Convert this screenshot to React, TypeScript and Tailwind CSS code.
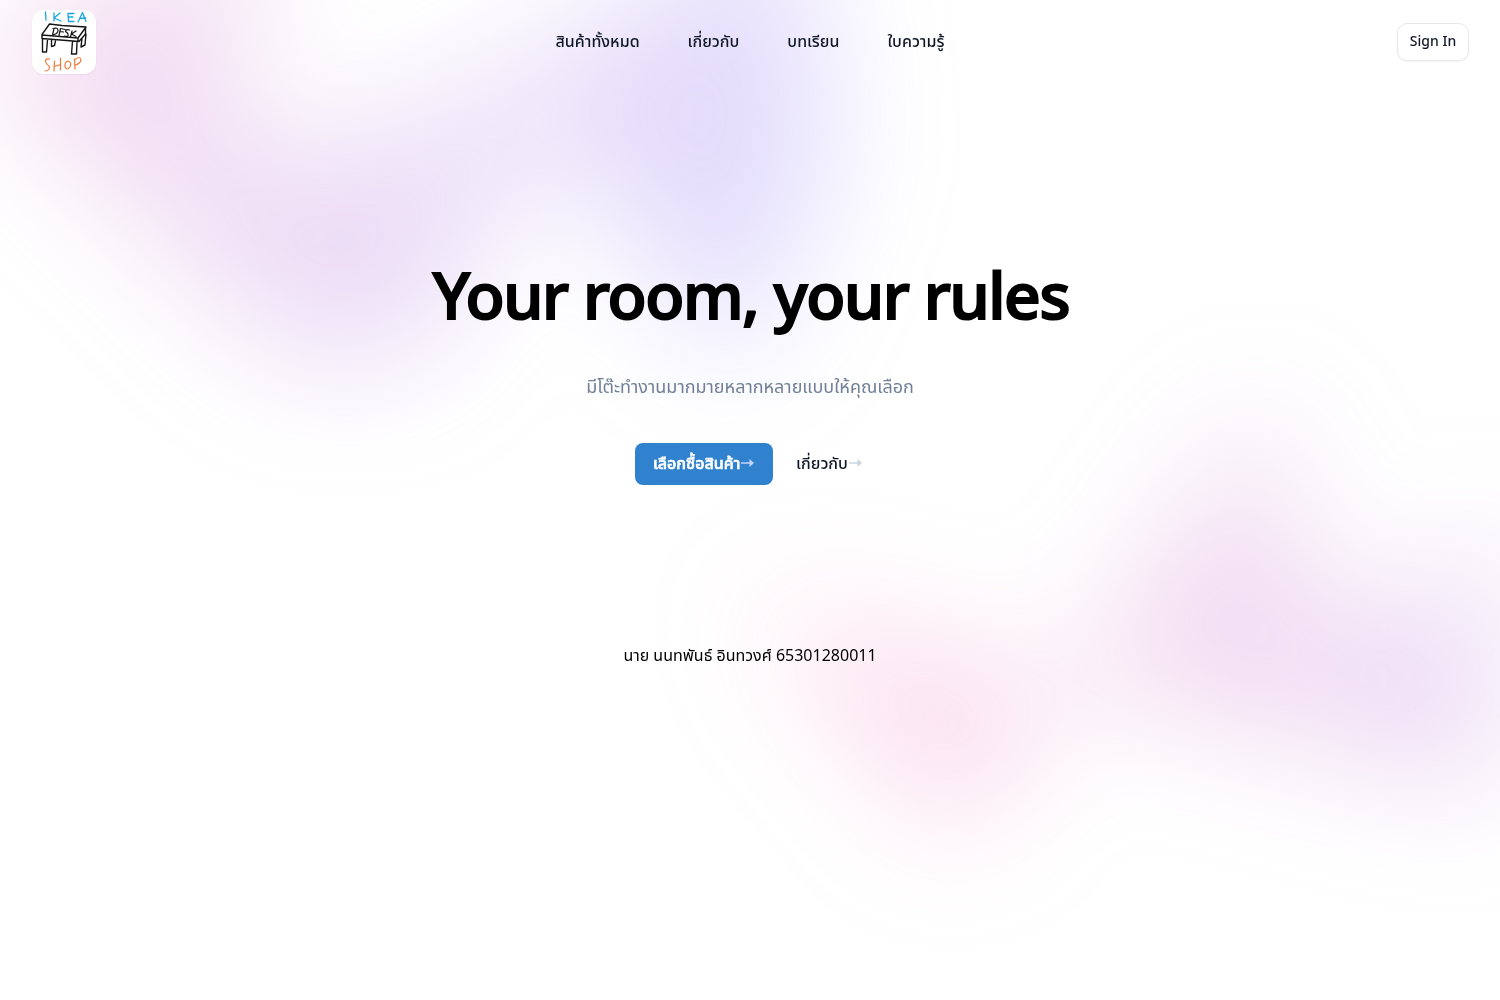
const blobShape =
  "[clip-path:polygon(74.1%_44.1%,100%_61.6%,97.5%_26.9%,85.5%_0.1%,80.7%_2%,72.5%_32.5%,60.2%_62.4%,52.4%_68.1%,47.5%_58.3%,45.2%_34.5%,27.5%_76.7%,0.1%_64.9%,17.9%_100%,27.6%_76.8%,76.1%_97.7%,74.1%_44.1%)]";

const links = ["สินค้าทั้งหมด", "เกี่ยวกับ", "บทเรียน", "ใบความรู้"];

function Logo() {
  return (
    <svg viewBox="0 0 64 64" className="size-16 rounded-xl bg-white shadow-xs" fill="none" strokeLinecap="round" strokeLinejoin="round">
      <g stroke="#1ba5e0" strokeWidth="1.3">
        <path d="M13.500 2L14 10M22 3V11M28 3L22 8L29 11M42 3.500H36L36.500 11.500L42 11.500M36 7H41M46 12L50.500 2.500L54 11.500M48 8.500L53.500 8" />
      </g>
      <g stroke="#161616" strokeWidth="1.4">
        <path d="M10 24.500L17.500 14L30 15.500L54 17L46 28L10 25V28.500L47 31.500L53.500 24V17.500M46 28V31M10.500 29V42H14.500L15.500 30M19.500 30V36.500L22.500 35.500L23.500 31M40.500 31.500L39.500 44H44.500L45 32M50 28L49 37L53 35L54 24" />
        <path d="M22 18.500L20.500 25Q26 24 26 20.500Q26 17 21 18.500M33 19.500L28.500 18.500L27 25.500M28 21.500L31.500 22M37.500 20Q33.500 19 33.500 21.500Q37.500 24 35.500 26.500L32.500 26M40 21L38.500 27M44 21L39.500 24L44 26.500" strokeWidth="1.200" />
      </g>
      <g stroke="#f27a35" strokeWidth="1.2">
        <path d="M17.500 49Q13.500 48 13.500 51.500Q14 54 17 56Q19 60 13 61M22.500 51L22 61M28.500 48L28.500 60M22.500 56.500L28.500 54.500M36 51Q32.500 52 33 57Q35 61 38 57Q40 52 36 51M42.500 49L43 59M42.500 50Q48 45 49 50Q48 54 43 55" />
      </g>
    </svg>
  );
}

function Arrow() {
  return (
    <svg viewBox="0 0 15 10" className="mb-px h-2.5 w-[15px]" fill="none">
      <path d="M1 5H12" stroke="currentColor" strokeWidth="1.5" />
      <path d="M9.500 1L14 5L9.500 9Z" fill="currentColor" />
    </svg>
  );
}

export default function App() {
  return (
    <div className="h-screen overflow-hidden bg-white font-['Noto_Sans','Noto_Sans_Thai',sans-serif] text-black">
      <header className="relative z-10 flex h-[84px] items-center justify-between px-8">
        <div className="flex flex-1">
          <Logo />
        </div>
        <nav className="mb-0.5 flex gap-x-12">
          {links.map((link) => (
            <a key={link} href="#" className="text-base leading-6 font-medium text-gray-900">
              {link}
            </a>
          ))}
        </nav>
        <div className="flex flex-1 justify-end">
          <button className="mr-[-1px] h-[38px] w-[72px] rounded-[10px] border border-gray-200 bg-white pb-0.5 text-sm font-medium text-gray-900 shadow-xs">
            Sign In
          </button>
        </div>
      </header>
      <main className="relative isolate -mt-[84px] h-[643px]">
        <div className="absolute inset-x-0 -top-80 -z-10 transform-gpu overflow-hidden blur-3xl" aria-hidden="true">
          <div
            className={`relative left-[calc(50%-30rem+8px)] aspect-[1155/678] w-[72.1875rem] -translate-x-1/2 rotate-[30deg] bg-linear-[75deg] from-[#ff80b5] to-[#9089fc] opacity-30 ${blobShape}`}
          />
        </div>
        <div className="flex flex-col items-center pt-[259px]">
          <h1 className="pl-0.5 text-[64px] leading-[72px] font-medium tracking-[-1.35px] [-webkit-text-stroke:2px_black]">Your room, your rules</h1>
          <p className="mt-[39px] text-lg leading-8 text-[#718096]">มีโต๊ะทำงานมากมายหลากหลายแบบให้คุณเลือก</p>
          <div className="mt-[41px] flex items-center gap-x-[23px]">
            <a href="#" className="flex h-[42px] w-[138px] items-center justify-center rounded-lg bg-[#3182ce] pb-0.5 text-base font-medium text-white [-webkit-text-stroke:0.6px]">
              เลือกซื้อสินค้า
              <span className="text-indigo-200"><Arrow /></span>
            </a>
            <a href="#" className="mr-0.5 flex items-center pb-0.5 text-base font-medium text-gray-900">
              เกี่ยวกับ
              <span className="text-slate-300"><Arrow /></span>
            </a>
          </div>
        </div>
        <div className="absolute inset-x-0 top-[calc(100%-30rem)] -z-10 transform-gpu overflow-hidden blur-3xl" aria-hidden="true">
          <div
            className={`relative left-[calc(50%+36rem)] aspect-[1155/678] w-[72.1875rem] -translate-x-1/2 bg-linear-[75deg] from-[#ff80b5] to-[#9089fc] opacity-30 ${blobShape}`}
          />
        </div>
      </main>
      <footer className="relative text-center text-base leading-6">นาย นนทพันธ์ อินทวงศ์ 65301280011</footer>
    </div>
  );
}
